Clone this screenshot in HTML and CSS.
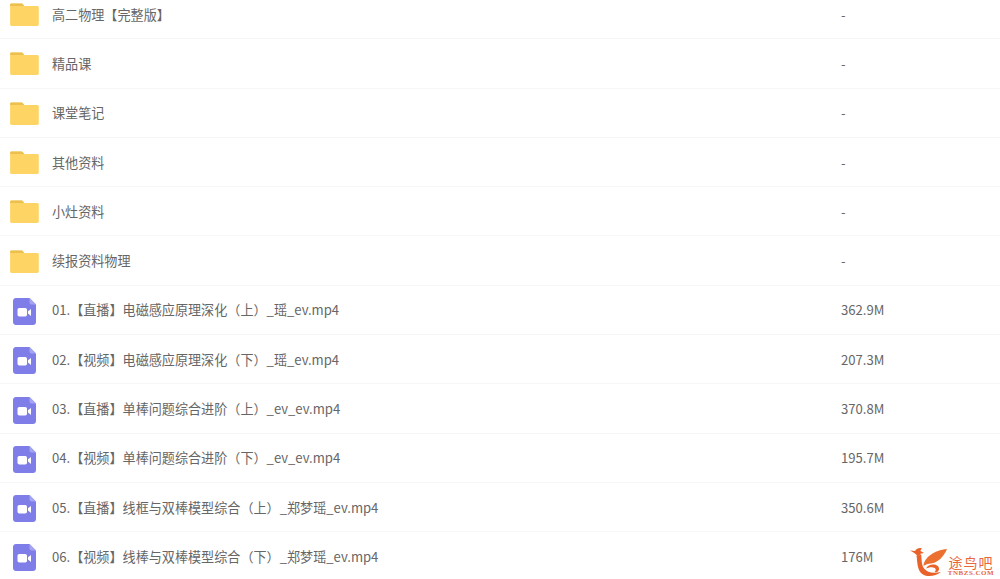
FILE: index.html
```html
<!DOCTYPE html>
<html lang="zh-CN">
<head>
    <meta charset="UTF-8">
    <meta name="viewport" content="width=device-width, initial-scale=1.0">
    <title>文件列表</title>
    <link rel="stylesheet" href="styles.css">
</head>
<body>
    <svg class="icon-defs" width="0" height="0" aria-hidden="true">
        <symbol id="folder" viewBox="0 0 30 24">
            <path d="M1.500 0.500h10c1 0 1.600.4 2.200 1.200l1 1.300H28.500c.8 0 1.400.6 1.400 1.400v18c0 .9-.6 1.500-1.400 1.500H1.500C.6 24 0 23.400 0 22.500V2C0 1.100.6.500 1.500.500z" fill="#fed565"/>
            <path d="M1.500.500h10c1 0 1.600.4 2.200 1.200l1 1.300H0V2C0 1.100.6.500 1.500.500z" fill="#ecc050"/>
        </symbol>
        <symbol id="video" viewBox="0 0 23 27">
            <path d="M3 0h13.500L23 6.500V24c0 1.700-1.300 3-3 3H3c-1.700 0-3-1.300-3-3V3c0-1.700 1.300-3 3-3z" fill="#7f7ee9"/>
            <path d="M16.500 0L23 6.500h-4.500c-1.100 0-2-.9-2-2z" fill="#a5a4f2"/>
            <rect x="4.500" y="10" width="9.500" height="8.500" rx="1.800" fill="#fff"/>
            <path d="M15 13.200l3-2.300v7l-3-2.300z" fill="#fff"/>
        </symbol>
    </svg>

    <ul class="file-list">
        <li class="file-row">
            <svg class="icon icon-folder"><use href="#folder"/></svg>
            <span class="file-name">高二物理【完整版】</span>
            <span class="file-size">-</span>
        </li>
        <li class="file-row">
            <svg class="icon icon-folder"><use href="#folder"/></svg>
            <span class="file-name">精品课</span>
            <span class="file-size">-</span>
        </li>
        <li class="file-row">
            <svg class="icon icon-folder"><use href="#folder"/></svg>
            <span class="file-name">课堂笔记</span>
            <span class="file-size">-</span>
        </li>
        <li class="file-row">
            <svg class="icon icon-folder"><use href="#folder"/></svg>
            <span class="file-name">其他资料</span>
            <span class="file-size">-</span>
        </li>
        <li class="file-row">
            <svg class="icon icon-folder"><use href="#folder"/></svg>
            <span class="file-name">小灶资料</span>
            <span class="file-size">-</span>
        </li>
        <li class="file-row">
            <svg class="icon icon-folder"><use href="#folder"/></svg>
            <span class="file-name">续报资料物理</span>
            <span class="file-size">-</span>
        </li>
        <li class="file-row">
            <svg class="icon icon-video"><use href="#video"/></svg>
            <span class="file-name">01.【直播】电磁感应原理深化（上）_瑶_ev.mp4</span>
            <span class="file-size">362.9M</span>
        </li>
        <li class="file-row">
            <svg class="icon icon-video"><use href="#video"/></svg>
            <span class="file-name">02.【视频】电磁感应原理深化（下）_瑶_ev.mp4</span>
            <span class="file-size">207.3M</span>
        </li>
        <li class="file-row">
            <svg class="icon icon-video"><use href="#video"/></svg>
            <span class="file-name">03.【直播】单棒问题综合进阶（上）_ev_ev.mp4</span>
            <span class="file-size">370.8M</span>
        </li>
        <li class="file-row">
            <svg class="icon icon-video"><use href="#video"/></svg>
            <span class="file-name">04.【视频】单棒问题综合进阶（下）_ev_ev.mp4</span>
            <span class="file-size">195.7M</span>
        </li>
        <li class="file-row">
            <svg class="icon icon-video"><use href="#video"/></svg>
            <span class="file-name">05.【直播】线框与双棒模型综合（上）_郑梦瑶_ev.mp4</span>
            <span class="file-size">350.6M</span>
        </li>
        <li class="file-row">
            <svg class="icon icon-video"><use href="#video"/></svg>
            <span class="file-name">06.【视频】线棒与双棒模型综合（下）_郑梦瑶_ev.mp4</span>
            <span class="file-size">176M</span>
        </li>
    </ul>

    <div class="watermark">
        <svg class="watermark-logo" viewBox="0 0 38 30" aria-hidden="true">
            <!-- head and beak -->
            <path d="M0 3.500l5 .5c1.500-2.500 4.500-3.500 7-2.500-1 .7-1.500 1.500-1.500 2.500L14 6l-3.500.8C10 8 9 9 7.500 9 6 7 3 5 0 3.500z" fill="#e8622a"/>
            <!-- neck curling round the bottom -->
            <path d="M6.500 8.500c2 0 3.500-.5 4.500-1.500 1 5 0 10 3 14.500 3 4 9 5 17 3.500-5 4-13 5.500-18 2.500C7 24 7.500 15 6.500 8.500z" fill="#e8622a"/>
            <!-- wing -->
            <path d="M13.500 19C14 11 24 3 37 2c-3.500 8-9 13.500-16 14.500-3 .4-5.500 1-7.500 2.500z" fill="#ec702f"/>
            <!-- inner spiral -->
            <path d="M16 21.500c1.500-3 5-4.500 8.500-4 3 .5 5 2.500 4.500 5-.4 2-2.200 3-4.500 2.500 1.500-1 1.800-3 .3-4-2.800-1.500-6-.7-8.800.5z" fill="#e8622a"/>
        </svg>
        <div class="watermark-text">
            <span class="watermark-name">途鸟吧</span>
            <span class="watermark-url">TNBZS.COM</span>
        </div>
    </div>
</body>
</html>
```

FILE: styles.css
```css
* {
    box-sizing: border-box;
}
html, body {
    height: 100%;
}
body {
    position: relative;
    margin: 0;
    overflow: hidden;
    background-color: #fff;
    font-family: "Noto Sans CJK SC", "Liberation Sans", sans-serif;
    font-size: 13.100px;
    color: #666;
}
.icon-defs {
    display: block;
    height: 0;
}
.file-list {
    list-style: none;
    margin: -10px 0 0;
    padding: 0;
}
.file-row {
    display: flex;
    align-items: center;
    height: 49.300px;
    border-bottom: 1px solid #f6f6f6;
}
.icon {
    flex: none;
    display: block;
}
.icon-folder {
    width: 29px;
    height: 23px;
    margin: 1px 13px 0 10px;
}
.icon-video {
    width: 23px;
    height: 27px;
    margin: 3px 16px 0 13px;
}
.file-name {
    flex: none;
    width: 789px;
    white-space: nowrap;
}
.file-size {
    flex: none;
}
.watermark {
    position: absolute;
    left: 910px;
    top: 547px;
    display: flex;
    align-items: flex-end;
}
.watermark-logo {
    display: block;
    width: 38px;
    height: 30px;
}
.watermark-text {
    display: flex;
    flex-direction: column;
    align-items: center;
    width: 46px;
    color: #e8683c;
    white-space: nowrap;
}
.watermark-name {
    height: 15px;
    font-size: 14px;
    line-height: 15px;
    letter-spacing: 1px;
}
.watermark-url {
    height: 7px;
    font-family: "Liberation Serif", serif;
    font-size: 7px;
    font-weight: bold;
    line-height: 7px;
    letter-spacing: .5px;
}
```
